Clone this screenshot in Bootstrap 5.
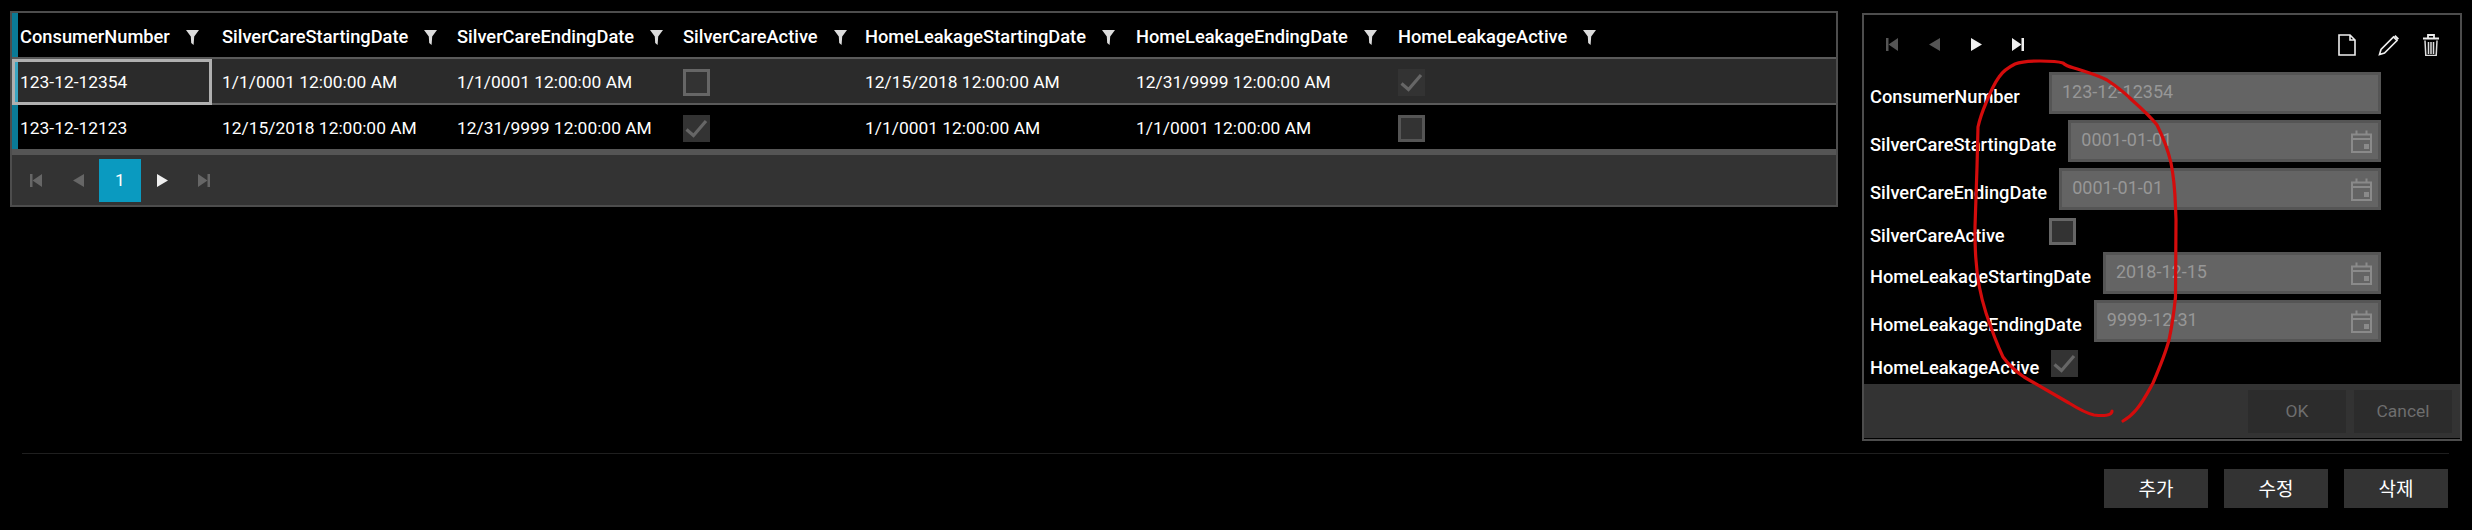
<!DOCTYPE html>
<html lang="en">
<head>
<meta charset="utf-8">
<title>Consumer grid</title>
<link href="https://cdn.jsdelivr.net/npm/bootstrap@5.3.0/dist/css/bootstrap.min.css" rel="stylesheet">
<style>
html,body{background:#000;height:100%}
body{font-family:Roboto,"Noto Sans CJK KR",sans-serif;font-size:17.4px;color:#fff;position:relative;overflow:hidden;line-height:1.3}
.top-zone{height:441px;padding-left:10px}
.grid-box{width:1828px;margin-top:11px;border:2px solid #4d4d4d;background:#000}
.grid-tbl{--bs-table-bg:transparent;--bs-table-color:#fff;table-layout:fixed;border-collapse:separate;border-spacing:0;width:1824px;color:#fff}
.grid-tbl>thead>tr>th{height:46px;padding:3px 0 0 8px;border-bottom:2px solid #5a5a5a;font-weight:500;font-size:18.3px;vertical-align:middle;white-space:nowrap;background:#000;color:#fff}
.grid-tbl>tbody>tr>td{height:46px;padding:3px 0 0 8px;border-bottom:2px solid #5a5a5a;vertical-align:middle;white-space:nowrap;color:#fff}
.grid-tbl>tbody>tr.alt-row>td{background:#2b2b2b}
.grid-tbl>tbody>tr.end-row>td{height:50px;border-bottom:6px solid #555;background:#000}
.grid-tbl>thead>tr>th.first-c,.grid-tbl>tbody>tr>td.first-c{padding-left:8px;box-shadow:inset 6px 0 0 #0a7a96}
.grid-tbl>tbody>tr>td.focus-c{outline:3px solid #b0b0b0;outline-offset:-3px;box-shadow:inset 6px 0 0 #3aa5c2}
.grid-tbl>thead>tr>th.wide-p,.grid-tbl>tbody>tr>td.wide-p{padding-left:10px}
.flt{width:13px;height:15px;margin-left:16px;vertical-align:-2px}
.pager-bar{background:#333;height:50px;padding:4px 3px 3px}
.pg-slot{width:42px;height:43px}
.pg-on{background:#0a9ac0;color:#fff}
.chk{width:27px;height:27px;display:block;background:#333;border:3px solid #666}
.chk-on{background:#333;border-color:#333}
.chk-on svg{display:block;margin:-3px}
.end-row .chk{border-color:#555}
.end-row .chk-on{border-color:#333}
.form-box{width:600px;margin-left:24px;margin-top:13px;height:428px;border:2px solid #4d4d4d;background:#000}
.tool-bar{height:57px;padding:2px 20px 0 7px}
.tool-gap{gap:22px}
.form-area{padding:0 79px 0 6px}
.f-row{display:flex;margin-bottom:6px;height:42px}
.f-row.chk-row{height:30px;padding-top:2px}
.f-lab{min-width:167px;margin:0 12px 0 0;padding-top:8px;font-weight:500;font-size:18.3px;align-self:center;white-space:nowrap;color:#fff}
.f-wrap{position:relative;flex:1 1 auto}
.f-wrap .form-control{height:42px;background:#646464;border:3px solid #555;border-radius:0;color:#979797;font-size:18px;padding:0 0 4px 10px;box-shadow:none;opacity:1}
.cal{position:absolute;right:9px;top:10px}
.form-foot{height:54px;background:#333;padding:6px 8px 5px 0}
.off-btn{width:98px;height:43px;background:#2c2c2c;border:0;border-radius:0;color:#6e6e6e;font-size:17.4px;padding:0}
.off-btn:disabled{background:#2c2c2c;color:#6e6e6e;opacity:1}
.rule-line{height:1px;background:#1f1f1f;margin:12px 23px 0 22px}
.act-zone{margin-top:15px;padding-right:24px}
.act-btn{width:104px;height:39px;background:#333;border:0;border-radius:0;color:#fff;font-size:19px;padding:0;font-family:"Noto Sans CJK KR",sans-serif}
.act-btn:hover{background:#333;color:#fff}
.scribble{position:absolute;left:0;top:0;pointer-events:none}
</style>
</head>
<body>
<svg width="0" height="0" class="position-absolute">
  <defs>
    <symbol id="i-first" viewBox="0 0 12 13"><rect x="0" y="0" width="2.5" height="13" fill="currentColor"/><path d="M12 0v13L2.5 6.5z" fill="currentColor"/></symbol>
    <symbol id="i-prev" viewBox="0 0 11 13"><path d="M11 0v13L0 6.5z" fill="currentColor"/></symbol>
    <symbol id="i-next" viewBox="0 0 11 13"><path d="M0 0v13l11-6.5z" fill="currentColor"/></symbol>
    <symbol id="i-last" viewBox="0 0 12 13"><path d="M0 0v13l9.5-6.5z" fill="currentColor"/><rect x="9.5" y="0" width="2.5" height="13" fill="currentColor"/></symbol>
    <symbol id="i-flt" viewBox="0 0 13 15"><path d="M0 0h13L8.2 6.5 7.6 15 5.2 13 4.8 6.5z" fill="#dcdcdc"/></symbol>
    <symbol id="i-cal" viewBox="0 0 21 23"><path d="M1 4.500h19V22H1zM1 9h19M5.500 0.500v5M15.500 0.500v5" fill="none" stroke="#8a8a8a" stroke-width="2"/><rect x="13" y="14" width="5" height="5" fill="#8a8a8a"/></symbol>
    <symbol id="i-check" viewBox="0 0 27 27"><path d="M3.500 14.500L10.500 20.500L23 6" fill="none" stroke="#666" stroke-width="3.200"/></symbol>
  </defs>
</svg>

<div class="top-zone d-flex align-items-start">
  <div class="grid-box">
    <table class="table table-borderless mb-0 grid-tbl">
      <colgroup>
        <col style="width:200px"><col style="width:237px"><col style="width:226px"><col style="width:182px"><col style="width:271px"><col style="width:262px"><col>
      </colgroup>
      <thead>
        <tr>
          <th class="first-c">ConsumerNumber<svg class="flt"><use href="#i-flt"/></svg></th>
          <th class="wide-p">SilverCareStartingDate<svg class="flt"><use href="#i-flt"/></svg></th>
          <th>SilverCareEndingDate<svg class="flt"><use href="#i-flt"/></svg></th>
          <th>SilverCareActive<svg class="flt"><use href="#i-flt"/></svg></th>
          <th>HomeLeakageStartingDate<svg class="flt"><use href="#i-flt"/></svg></th>
          <th>HomeLeakageEndingDate<svg class="flt"><use href="#i-flt"/></svg></th>
          <th>HomeLeakageActive<svg class="flt"><use href="#i-flt"/></svg></th>
        </tr>
      </thead>
      <tbody>
        <tr class="alt-row">
          <td class="first-c focus-c">123-12-12354</td>
          <td class="wide-p">1/1/0001 12:00:00 AM</td>
          <td>1/1/0001 12:00:00 AM</td>
          <td><span class="chk"></span></td>
          <td>12/15/2018 12:00:00 AM</td>
          <td>12/31/9999 12:00:00 AM</td>
          <td><span class="chk chk-on"><svg width="27" height="27"><use href="#i-check"/></svg></span></td>
        </tr>
        <tr class="end-row">
          <td class="first-c">123-12-12123</td>
          <td class="wide-p">12/15/2018 12:00:00 AM</td>
          <td>12/31/9999 12:00:00 AM</td>
          <td><span class="chk chk-on"><svg width="27" height="27"><use href="#i-check"/></svg></span></td>
          <td>1/1/0001 12:00:00 AM</td>
          <td>1/1/0001 12:00:00 AM</td>
          <td><span class="chk"></span></td>
        </tr>
      </tbody>
    </table>
    <div class="pager-bar d-flex">
      <div class="pg-slot d-flex align-items-center justify-content-center"><svg width="12" height="13" color="#666"><use href="#i-first"/></svg></div>
      <div class="pg-slot d-flex align-items-center justify-content-center"><svg width="11" height="13" color="#666"><use href="#i-prev"/></svg></div>
      <div class="pg-slot pg-on d-flex align-items-center justify-content-center">1</div>
      <div class="pg-slot d-flex align-items-center justify-content-center"><svg width="11" height="13" color="#f0f0f0"><use href="#i-next"/></svg></div>
      <div class="pg-slot d-flex align-items-center justify-content-center"><svg width="12" height="13" color="#666"><use href="#i-last"/></svg></div>
    </div>
  </div>

  <div class="form-box">
    <div class="tool-bar d-flex align-items-center">
      <div class="pg-slot d-flex align-items-center justify-content-center"><svg width="12" height="13" color="#555"><use href="#i-first"/></svg></div>
      <div class="pg-slot d-flex align-items-center justify-content-center"><svg width="11" height="13" color="#555"><use href="#i-prev"/></svg></div>
      <div class="pg-slot d-flex align-items-center justify-content-center"><svg width="11" height="13" color="#f0f0f0"><use href="#i-next"/></svg></div>
      <div class="pg-slot d-flex align-items-center justify-content-center"><svg width="12" height="13" color="#f0f0f0"><use href="#i-last"/></svg></div>
      <div class="ms-auto d-flex align-items-center tool-gap">
        <svg width="18" height="22" viewBox="0 0 18 22"><path d="M1 1h11l5 5v15H1zM12 1v5h5" fill="none" stroke="#eee" stroke-width="1.600"/></svg>
        <svg width="22" height="22" viewBox="0 0 22 22"><path d="M1.500 20.500l1.500-5L15.500 3l3.500 3.500L6.500 19z" fill="none" stroke="#eee" stroke-width="1.600"/><path d="M16 2.500l1.500-1.500 3.500 3.500-1.500 1.500z" fill="#eee"/></svg>
        <svg width="18" height="22" viewBox="0 0 18 22"><path d="M1 4.500h16M6 4V1h6v3" fill="none" stroke="#eee" stroke-width="1.800"/><path d="M3 6.500l.8 15h10.400l.8-15M6.500 8v12M9 8v12M11.500 8v12" fill="none" stroke="#ddd" stroke-width="1.500"/></svg>
      </div>
    </div>
    <div class="form-area">
      <div class="f-row"><label class="f-lab">ConsumerNumber</label><div class="f-wrap"><input class="form-control" value="123-12-12354" disabled></div></div>
      <div class="f-row"><label class="f-lab">SilverCareStartingDate</label><div class="f-wrap"><input class="form-control" value="0001-01-01" disabled><svg class="cal" width="21" height="23"><use href="#i-cal"/></svg></div></div>
      <div class="f-row"><label class="f-lab">SilverCareEndingDate</label><div class="f-wrap"><input class="form-control" value="0001-01-01" disabled><svg class="cal" width="21" height="23"><use href="#i-cal"/></svg></div></div>
      <div class="f-row chk-row"><label class="f-lab">SilverCareActive</label><span class="chk"></span></div>
      <div class="f-row"><label class="f-lab">HomeLeakageStartingDate</label><div class="f-wrap"><input class="form-control" value="2018-12-15" disabled><svg class="cal" width="21" height="23"><use href="#i-cal"/></svg></div></div>
      <div class="f-row"><label class="f-lab">HomeLeakageEndingDate</label><div class="f-wrap"><input class="form-control" value="9999-12-31" disabled><svg class="cal" width="21" height="23"><use href="#i-cal"/></svg></div></div>
      <div class="f-row chk-row"><label class="f-lab">HomeLeakageActive</label><span class="chk chk-on"><svg width="27" height="27"><use href="#i-check"/></svg></span></div>
    </div>
    <div class="form-foot d-flex justify-content-end gap-2">
      <button class="btn off-btn" disabled>OK</button>
      <button class="btn off-btn" disabled>Cancel</button>
    </div>
  </div>
</div>

<div class="rule-line"></div>
<div class="act-zone d-flex justify-content-end gap-3">
  <button class="btn act-btn">추가</button>
  <button class="btn act-btn">수정</button>
  <button class="btn act-btn">삭제</button>
</div>

<svg class="scribble" width="2472" height="530" fill="none">
  <path d="M2112 411C2112 416 2103 416 2094 415C2085 413 2077 408 2069 403L2024 377C2014 370 2008 364 2003 357C1996 342 1991 328 1986 313C1980 294 1977 277 1976 260C1975 250 1975 238 1975 227L1977 167L1978 127C1980 118 1983 110 1986 103C1990 93 1994 84 1999 77C2003 71 2009 67 2015 64C2023 61 2032 61 2040 61C2048 61 2057 61 2063 63C2066 66 2070 67 2074 68C2086 72 2097 75 2107 80C2116 86 2124 92 2132 100C2141 108 2150 116 2157 125C2163 137 2168 150 2171 163C2174 178 2175 192 2175.500 207L2176 220L2175.500 297C2174 312 2172 326 2169 340C2165 355 2159 369 2153 383C2148 392 2143 402 2136 410C2132 415 2128 418 2123 421" stroke="#d40c0c" stroke-width="3.200" stroke-linecap="round" stroke-linejoin="round"/>
</svg>
<script src="https://cdn.jsdelivr.net/npm/bootstrap@5.3.0/dist/js/bootstrap.bundle.min.js"></script>
</body>
</html>
